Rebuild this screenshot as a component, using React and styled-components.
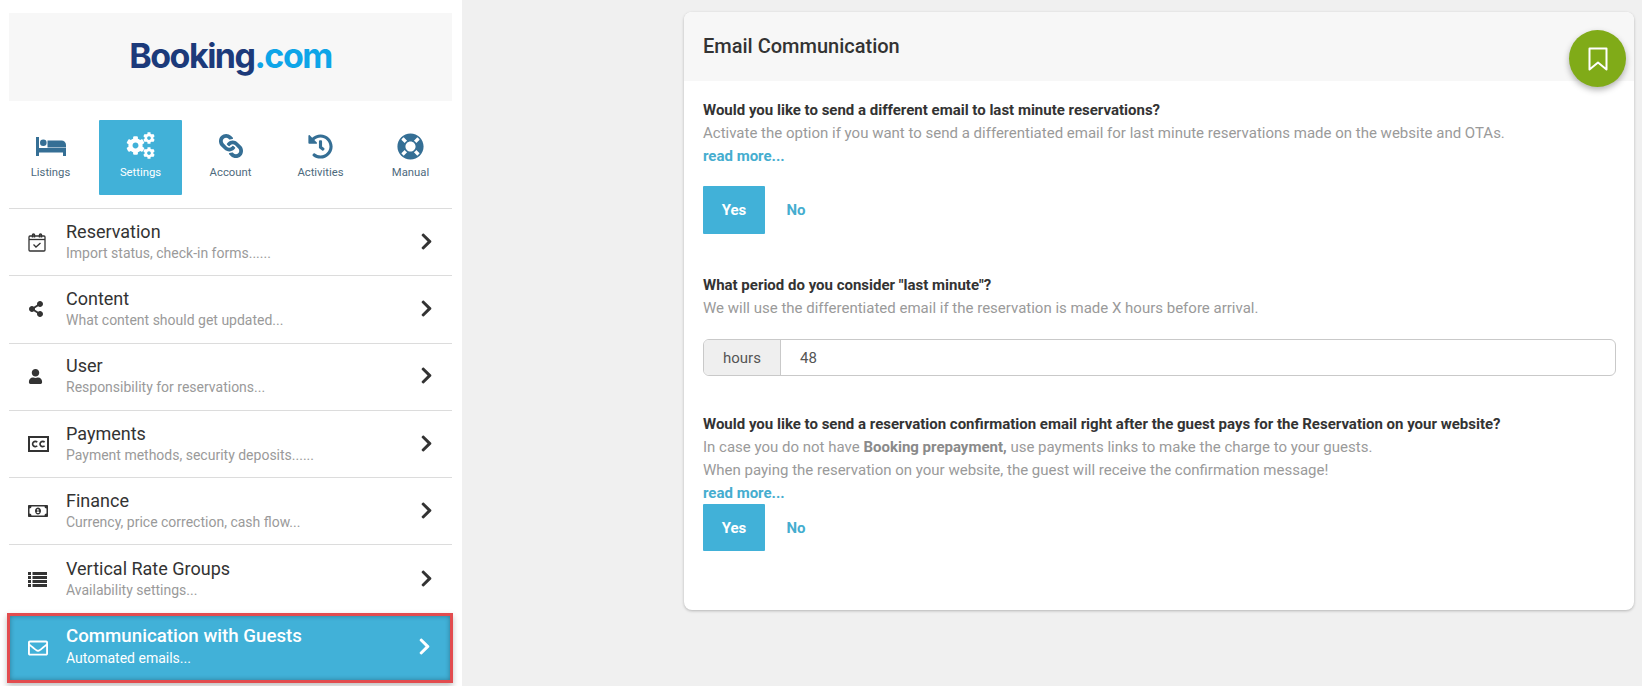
import React from 'react'
import styled, { createGlobalStyle } from 'styled-components'
import {
  FaCog, FaLink, FaHistory, FaLifeRing, FaShareAlt, FaUser,
  FaRegMoneyBillAlt, FaRegEnvelope, FaChevronRight,
} from 'react-icons/fa'

const GlobalStyle = createGlobalStyle`
  html, body { margin: 0; padding: 0; height: 100%; overflow: hidden; }
  body { background: #f0f0f0; font-family: Roboto, "Liberation Sans", sans-serif; color: #333; }
  * { box-sizing: border-box; }
`

const Page = styled.div`
  display: flex;
  height: 686px;
  width: 1642px;
`

const Sidebar = styled.aside`
  width: 462px;
  flex: none;
  background: #fff;
  padding: 13px 10px 0 9px;
`

const LogoBox = styled.div`
  height: 88px;
  background: #f7f7f7;
  display: flex;
  align-items: center;
  justify-content: center;
  padding-bottom: 3px;
`

const LogoText = styled.div`
  font-family: Inter, Roboto, sans-serif;
  font-weight: 700;
  font-size: 34px;
  letter-spacing: -1.5px;
  color: #1c3a7a;
  line-height: 1;
`

const LogoDot = styled.span`
  color: #0ea5e8;
`

const NavRow = styled.nav`
  display: grid;
  grid-template-columns: repeat(5, 90px);
  justify-content: center;
  padding: 19px 0 13px;
  border-bottom: 1px solid #dcdcdc;
`

const NavItem = styled.div`
  width: 83px;
  height: 75px;
  justify-self: center;
  display: flex;
  flex-direction: column;
  align-items: center;
  padding-top: 12px;
  border-radius: 1px;
  background: ${(p) => (p.$active ? '#41b1d8' : 'transparent')};
  color: ${(p) => (p.$active ? '#fff' : '#356f95')};
`

const NavIcon = styled.div`
  height: 28px;
  display: flex;
  align-items: center;
  justify-content: center;
`

const LinkIcon = styled(FaLink)`
  transform: rotate(90deg);
`

const NavLabel = styled.span`
  margin-top: 6px;
  font-size: 11.3px;
  line-height: 14px;
  color: ${(p) => (p.$active ? '#fff' : '#4d6a7d')};
`

const MenuRow = styled.div`
  height: 67.3px;
  display: flex;
  align-items: center;
  padding: 0 16px 0 19px;
  border-bottom: 1px solid #dcdcdc;
  &:nth-last-child(2) { border-bottom: none; }
`

const ActiveRow = styled(MenuRow)`
  height: 70px;
  padding: 0 16px 0 18px;
  background: #41b1d8;
  color: #fff;
  border: 3px solid #e24c4f;
  margin: 0 -1px 0 -2px;
  box-shadow: 0 3px 6px rgba(0, 0, 0, 0.25), inset 0 0 5px rgba(0, 0, 0, 0.3);
`

const MenuIcon = styled.div`
  width: 38px;
  flex: none;
  display: flex;
  align-items: center;
  color: ${(p) => (p.$active ? '#fff' : '#333')};
`

const MenuText = styled.div`
  flex: 1;
  min-width: 0;
  padding-bottom: ${(p) => (p.$active ? 3 : 2)}px;
`

const MenuTitle = styled.div`
  font-size: ${(p) => (p.$active ? 18.7 : 18)}px;
  line-height: 23px;
  font-weight: ${(p) => (p.$active ? 500 : 400)};
  color: ${(p) => (p.$active ? '#fff' : '#333')};
`

const MenuSub = styled.div`
  font-size: 14px;
  line-height: 20px;
  color: ${(p) => (p.$active ? '#fff' : '#9a9a9a')};
`

const Chevron = styled(FaChevronRight)`
  font-size: 19px;
  margin-bottom: 2px;
  color: ${(p) => (p.$active ? '#fff' : '#333')};
`

const Main = styled.main`
  flex: 1;
  padding: 12px 8px 0 222px;
`

const Card = styled.section`
  position: relative;
  height: 598px;
  background: #fff;
  border-radius: 8px;
  box-shadow: 0 1px 3px rgba(0, 0, 0, 0.25);
`

const CardHeader = styled.header`
  height: 69px;
  background: #f7f7f7;
  border-radius: 8px 8px 0 0;
  padding: 22px 19px 0;
  font-size: 20px;
  line-height: 24px;
  font-weight: 500;
  color: #333;
`

const Fab = styled.button`
  position: absolute;
  top: 18px;
  right: 8px;
  width: 57px;
  height: 57px;
  border: none;
  border-radius: 50%;
  background: #80ab18;
  box-shadow: 0 3px 6px rgba(0, 0, 0, 0.3);
  display: flex;
  align-items: center;
  justify-content: center;
`

const CardBody = styled.div`
  padding: 18px 18px 0 19px;
`

const Block = styled.div`
  margin-bottom: ${(p) => p.$gap || 0}px;
`

const Question = styled.div`
  font-size: 15px;
  line-height: 23px;
  font-weight: 700;
  color: #333;
`

const Desc = styled.div`
  font-size: 15px;
  line-height: 23px;
  color: #9a9a9a;
  b { font-weight: 700; color: #8a8a8a; }
`

const ReadMore = styled.a`
  display: block;
  font-size: 15px;
  line-height: 23px;
  font-weight: 700;
  color: #45adcf;
`

const Toggle = styled.div`
  display: flex;
  align-items: center;
  margin-top: ${(p) => p.$top}px;
`

const ToggleButton = styled.div`
  width: 62px;
  height: ${(p) => p.$h}px;
  display: flex;
  align-items: center;
  justify-content: center;
  font-size: 15px;
  font-weight: 700;
  border-radius: 1px;
  background: ${(p) => (p.$on ? '#41b1d8' : 'transparent')};
  color: ${(p) => (p.$on ? '#fff' : '#45adcf')};
`

const InputGroup = styled.div`
  display: flex;
  height: 37px;
  margin-top: 19px;
  border: 1px solid #c9c9c9;
  border-radius: 6px;
  overflow: hidden;
`

const Addon = styled.div`
  width: 77px;
  flex: none;
  display: flex;
  align-items: center;
  justify-content: center;
  background: #efefef;
  border-right: 1px solid #c9c9c9;
  font-size: 15px;
  color: #555;
`

const Value = styled.div`
  flex: 1;
  display: flex;
  align-items: center;
  padding-left: 19px;
  font-size: 15px;
  color: #555;
`

const BedIcon = () => (
  <svg width="30" height="19" viewBox="0 0 30 19" fill="currentColor">
    <rect x="0" y="0" width="3" height="19" />
    <circle cx="7.3" cy="5.7" r="3.3" />
    <path d="M11.5 3.5h14a4.5 4.5 0 0 1 4.5 4.5v2.5H11.5z" />
    <rect x="0" y="11" width="30" height="4.5" />
    <rect x="27" y="11" width="3" height="8" />
  </svg>
)

const CogsIcon = () => (
  <svg width="29" height="28" viewBox="0 0 29 28" fill="currentColor">
    <FaCog x="0" y="4" size={19} />
    <FaCog x="17" y="0" size={12} />
    <FaCog x="17" y="15" size={12} />
  </svg>
)

const CalendarIcon = () => (
  <svg width="18" height="19" viewBox="0 0 18 19" fill="none" stroke="currentColor" strokeWidth="1.3">
    <rect x="1" y="3" width="16" height="15" rx="1" />
    <path d="M1 6.5h16" />
    <path d="M4.5 4.5V2a1 1 0 0 1 2 0v2.5M11.5 4.5V2a1 1 0 0 1 2 0v2.5" strokeWidth="1.5" />
    <path d="M5.5 11.5l2.5 2.5 4.5-4" />
  </svg>
)

const CcIcon = () => (
  <svg width="21" height="16" viewBox="0 0 21 16" fill="none" stroke="currentColor">
    <rect x="1" y="1" width="19" height="14" strokeWidth="2" />
    <path d="M9.2 6.3A2.6 2.6 0 1 0 9.2 9.7M16.6 6.3A2.6 2.6 0 1 0 16.6 9.7" strokeWidth="1.7" />
  </svg>
)

const ListIcon = () => (
  <svg width="19" height="15" viewBox="0 0 19 15" fill="currentColor">
    {[0, 4, 8, 12].map((y) => (
      <g key={y}>
        <rect x="0" y={y} width="3" height="3" />
        <rect x="4.5" y={y} width="14.5" height="3" />
      </g>
    ))}
  </svg>
)

const nav = [
  ['Listings', <BedIcon />],
  ['Settings', <CogsIcon />, true],
  ['Account', <LinkIcon size={24} />],
  ['Activities', <FaHistory size={25} />],
  ['Manual', <FaLifeRing size={27} />],
]

const menu = [
  ['Reservation', 'Import status, check-in forms......', <CalendarIcon />],
  ['Content', 'What content should get updated...', <FaShareAlt size={16} />],
  ['User', 'Responsibility for reservations...', <FaUser size={15} />],
  ['Payments', 'Payment methods, security deposits......', <CcIcon />],
  ['Finance', 'Currency, price correction, cash flow...', <FaRegMoneyBillAlt size={20} />],
  ['Vertical Rate Groups', 'Availability settings...', <ListIcon />],
]

const App = () => {
  return (
    <Page>
      <GlobalStyle />
      <Sidebar>
        <LogoBox>
          <LogoText>Booking<LogoDot>.com</LogoDot></LogoText>
        </LogoBox>
        <NavRow>
          {nav.map(([label, icon, active]) => (
            <NavItem key={label} $active={active}>
              <NavIcon>{icon}</NavIcon>
              <NavLabel $active={active}>{label}</NavLabel>
            </NavItem>
          ))}
        </NavRow>
        {menu.map(([title, sub, icon]) => (
          <MenuRow key={title}>
            <MenuIcon>{icon}</MenuIcon>
            <MenuText>
              <MenuTitle>{title}</MenuTitle>
              <MenuSub>{sub}</MenuSub>
            </MenuText>
            <Chevron />
          </MenuRow>
        ))}
        <ActiveRow>
          <MenuIcon $active><FaRegEnvelope size={20} /></MenuIcon>
          <MenuText $active>
            <MenuTitle $active>Communication with Guests</MenuTitle>
            <MenuSub $active>Automated emails...</MenuSub>
          </MenuText>
          <Chevron $active />
        </ActiveRow>
      </Sidebar>
      <Main>
        <Card>
          <CardHeader>Email Communication</CardHeader>
          <Fab>
            <svg width="20" height="24" viewBox="0 0 20 24" fill="none" stroke="#fff" strokeWidth="2" strokeLinejoin="round">
              <path d="M1.5 1.5h17v21L10 15.5 1.5 22.5z" />
            </svg>
          </Fab>
          <CardBody>
            <Block $gap={40}>
              <Question>Would you like to send a different email to last minute reservations?</Question>
              <Desc>Activate the option if you want to send a differentiated email for last minute reservations made on the website and OTAs.</Desc>
              <ReadMore>read more...</ReadMore>
              <Toggle $top={18}>
                <ToggleButton $on $h={48}>Yes</ToggleButton>
                <ToggleButton $h={48}>No</ToggleButton>
              </Toggle>
            </Block>
            <Block $gap={37}>
              <Question>What period do you consider "last minute"?</Question>
              <Desc>We will use the differentiated email if the reservation is made X hours before arrival.</Desc>
              <InputGroup>
                <Addon>hours</Addon>
                <Value>48</Value>
              </InputGroup>
            </Block>
            <Block>
              <Question>Would you like to send a reservation confirmation email right after the guest pays for the Reservation on your website?</Question>
              <Desc>In case you do not have <b>Booking prepayment,</b> use payments links to make the charge to your guests.</Desc>
              <Desc>When paying the reservation on your website, the guest will receive the confirmation message!</Desc>
              <ReadMore>read more...</ReadMore>
              <Toggle $top={-1}>
                <ToggleButton $on $h={47}>Yes</ToggleButton>
                <ToggleButton $h={47}>No</ToggleButton>
              </Toggle>
            </Block>
          </CardBody>
        </Card>
      </Main>
    </Page>
  )
}

export default App
